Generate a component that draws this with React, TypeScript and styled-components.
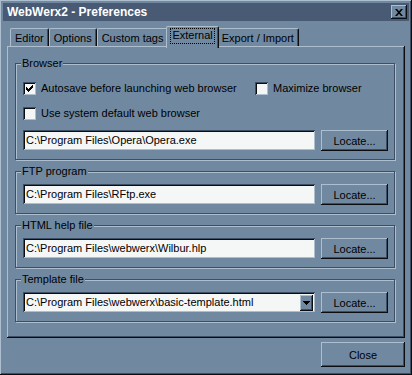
import React from 'react'
import styled, { createGlobalStyle } from 'styled-components'

const BG = '#7089a1'
const LIGHT = '#adbfcf'
const DARK = '#3e4f64'
const BLACK = '#0b0d10'
const FIELD = '#f5f6f6'
const TITLE = '#485a74'

const GlobalStyle = createGlobalStyle`
  * { box-sizing: border-box; }
  html, body { margin: 0; padding: 0; background: ${BG}; }
  body {
    font-family: "Liberation Sans", Arial, sans-serif;
    font-size: 11px;
    color: #000;
  }
`

const raised = `
  box-shadow: inset -1px -1px ${BLACK}, inset 1px 1px ${LIGHT}, inset -2px -2px ${DARK};
`

const sunken = `
  box-shadow: inset 1px 1px ${DARK}, inset -1px -1px ${LIGHT}, inset 2px 2px ${BLACK};
`

const Window = styled.div`
  width: 412px;
  height: 375px;
  padding: 3px;
  display: flex;
  flex-direction: column;
  background: ${BG};
  ${raised}
`

const TitleBar = styled.div`
  height: 18px;
  display: flex;
  align-items: center;
  justify-content: space-between;
  padding: 0 2px 0 4px;
  background: ${TITLE};
  color: #fff;
  font-size: 12px;
  font-weight: bold;
`

const TitleButton = styled.button`
  width: 16px;
  height: 14px;
  padding: 0;
  border: 0;
  display: flex;
  align-items: center;
  justify-content: center;
  background: ${BG};
  ${raised}
`

const Body = styled.div`
  flex: 1;
  display: flex;
  flex-direction: column;
  padding: 5px 4px 0 4px;
`

const TabStrip = styled.div`
  height: 20px;
  display: flex;
  align-items: flex-end;
  padding-left: 3px;
`

const Tab = styled.div<{ $active?: boolean }>`
  position: relative;
  height: ${p => (p.$active ? 22 : 18)}px;
  margin: ${p => (p.$active ? '0 -2px -2px -2px' : '0')};
  padding: ${p => (p.$active ? '1px 3px 0' : '0 4px')};
  z-index: ${p => (p.$active ? 1 : 0)};
  display: flex;
  align-items: ${p => (p.$active ? 'flex-start' : 'center')};
  background: ${BG};
  border-top: 1px solid ${LIGHT};
  border-left: 1px solid ${LIGHT};
  border-right: 1px solid ${BLACK};
  border-radius: 2px 2px 0 0;
  box-shadow: inset -1px 0 ${DARK};
  white-space: nowrap;
`

const Focus = styled.span`
  padding: 1px 2px 2px;
  outline: 1px dotted #000;
  outline-offset: -1px;
  line-height: 13px;
`

const Panel = styled.div`
  height: 292px;
  display: flex;
  flex-direction: column;
  gap: 5px;
  padding: 11px 10px 0 8px;
  ${raised}
`

const Group = styled.fieldset<{ $top: number }>`
  margin: 0;
  min-width: 0;
  padding: ${p => p.$top}px 6px 8px 7px;
  border: 1px solid ${DARK};
  box-shadow: inset 1px 1px ${LIGHT}, 1px 1px 0 ${LIGHT};
`

const Legend = styled.legend`
  margin-left: -2px;
  padding: 0 1px;
  line-height: 13px;
  background: ${BG};
`

const Options = styled.div`
  display: grid;
  grid-template-columns: 232px 1fr;
  row-gap: 12px;
  margin-bottom: 10px;
`

const Check = styled.label`
  height: 13px;
  display: flex;
  align-items: center;
  gap: 5px;
  line-height: 13px;
  white-space: nowrap;
`

const Box = styled.span`
  width: 13px;
  height: 13px;
  display: flex;
  align-items: center;
  justify-content: center;
  background: ${FIELD};
  ${sunken}
`

const FileRow = styled.div`
  display: flex;
  gap: 6px;
`

const Field = styled.div`
  flex: 1;
  height: 20px;
  display: flex;
  align-items: center;
  padding: 2px 2px 1px 3px;
  background: ${FIELD};
  ${sunken}
`

const FieldText = styled.span`
  flex: 1;
  line-height: 13px;
  white-space: nowrap;
`

const DropButton = styled.span`
  width: 13px;
  height: 16px;
  display: flex;
  align-items: center;
  justify-content: center;
  background: ${BG};
  ${raised}
`

const Button = styled.button<{ $w: number; $h: number }>`
  width: ${p => p.$w}px;
  height: ${p => p.$h}px;
  padding: 0;
  border: 0;
  font: inherit;
  color: #000;
  background: ${BG};
  ${raised}
`

const Footer = styled.div`
  display: flex;
  justify-content: flex-end;
  padding-top: 4px;
`

const CheckMark = () => (
  <svg width="7" height="7" viewBox="0 0 7 7" shapeRendering="crispEdges">
    <path d="M0 2 L0 5 L2 7 L7 2 L7 -1 L2 4 Z" fill="#000" />
  </svg>
)

const CloseGlyph = () => (
  <svg width="8" height="7" viewBox="0 0 8 7">
    <path d="M0 0 h2 l2 2.3 l2 -2.3 h2 l-3 3.5 l3 3.5 h-2 l-2 -2.3 l-2 2.3 h-2 l3 -3.5 z" fill="#000" />
  </svg>
)

const DownArrow = () => (
  <svg width="7" height="4" viewBox="0 0 7 4" shapeRendering="crispEdges">
    <path d="M0 0 H7 L3.5 4 Z" fill="#000" />
  </svg>
)

const CheckBox = ({ label, checked }: { label: string; checked?: boolean }) => (
  <Check>
    <Box>{checked && <CheckMark />}</Box>
    {label}
  </Check>
)

const tabs = ['Editor', 'Options', 'Custom tags', 'External', 'Export / Import']

type FileGroup = {
  title: string
  path: string
  combo?: boolean
}

const files: FileGroup[] = [
  { title: 'FTP program', path: 'C:\\Program Files\\RFtp.exe' },
  { title: 'HTML help file', path: 'C:\\Program Files\\webwerx\\Wilbur.hlp' },
  { title: 'Template file', path: 'C:\\Program Files\\webwerx\\basic-template.html', combo: true },
]

const PathRow = ({ path, combo }: { path: string; combo?: boolean }) => (
  <FileRow>
    <Field>
      <FieldText>{path}</FieldText>
      {combo && <DropButton><DownArrow /></DropButton>}
    </Field>
    <Button $w={67} $h={21}>Locate...</Button>
  </FileRow>
)

export default function App() {
  return (
    <>
      <GlobalStyle />
      <Window>
        <TitleBar>
          <span>WebWerx2 - Preferences</span>
          <TitleButton><CloseGlyph /></TitleButton>
        </TitleBar>
        <Body>
          <TabStrip>
            {tabs.map(t =>
              t === 'External'
                ? <Tab key={t} $active><Focus>{t}</Focus></Tab>
                : <Tab key={t}>{t}</Tab>
            )}
          </TabStrip>
          <Panel>
            <Group $top={12}>
              <Legend>Browser</Legend>
              <Options>
                <CheckBox label="Autosave before launching web browser" checked />
                <CheckBox label="Maximize browser" />
                <CheckBox label="Use system default web browser" />
              </Options>
              <PathRow path={'C:\\Program Files\\Opera\\Opera.exe'} />
            </Group>
            {files.map(f => (
              <Group key={f.title} $top={6}>
                <Legend>{f.title}</Legend>
                <PathRow path={f.path} combo={f.combo} />
              </Group>
            ))}
          </Panel>
          <Footer>
            <Button $w={84} $h={25}>Close</Button>
          </Footer>
        </Body>
      </Window>
    </>
  )
}
